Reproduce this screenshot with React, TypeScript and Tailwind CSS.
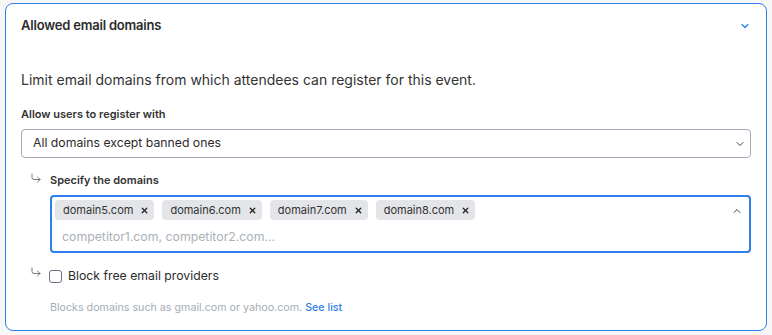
import { ChevronDown, ChevronUp, CornerDownRight, X } from 'lucide-react';

const domains = ['domain5.com', 'domain6.com', 'domain7.com', 'domain8.com'];

function Chip({ label }: { label: string }) {
  return (
    <span className="flex h-5 items-center gap-[7px] rounded bg-[#e3e5e8] pl-2 pr-[5px] text-[11px] text-[#333]">
      {label}
      <X className="h-[9px] w-[9px] text-[#222]" strokeWidth={3.5} />
    </span>
  );
}

export default function App() {
  return (
    <div className="min-h-screen bg-[#f7f7f8] px-[5px] pt-[3px] font-['Inter',sans-serif]">
      <div className="rounded-lg border border-[#2f80ed] bg-white px-[15px] pb-[15px]">
        {/* Header */}
        <div className="flex h-[43px] items-center justify-between">
          <h2 className="text-[13px] font-semibold tracking-[-0.2px] text-[#2b2b2b]">Allowed email domains</h2>
          <ChevronDown className="h-3 w-3 text-[#2f80ed]" strokeWidth={2.5} />
        </div>

        <p className="mt-[23px] text-sm leading-5 text-[#333]">
          Limit email domains from which attendees can register for this event.
        </p>

        <div className="mt-4 text-[11px] font-semibold leading-4 text-[#333]">
          Allow users to register with
        </div>
        <div className="mt-[7px] flex h-[29px] items-center justify-between rounded border border-[#a3acb6] pl-[11px] pr-[4px] text-[12.25px] text-[#2b2b2b]">
          <span>All domains except banned ones</span>
          <ChevronDown className="h-3 w-3 text-[#444]" strokeWidth={2} />
        </div>

        <div className="mt-[14px] flex items-center">
          <CornerDownRight className="ml-[9px] mr-[8px] h-3 w-3 -translate-y-[2px] text-[#555]" strokeWidth={1.6} />
          <span className="text-[11px] font-semibold leading-4 text-[#333]">Specify the domains</span>
        </div>

        <div className="ml-[29px] mt-[7px] flex items-start justify-between rounded border-2 border-[#2f80ed] pb-1 pl-[3px] pr-[6px] pt-[3px]">
          <div className="flex flex-col">
            <div className="flex gap-2">
              {domains.map((d) => (
                <Chip key={d} label={d} />
              ))}
            </div>
            <span className="mt-[7px] pl-[7px] text-[12.3px] leading-5 text-[#aab1b9]">
              competitor1.com, competitor2.com...
            </span>
          </div>
          <ChevronUp className="mt-[5px] h-3 w-3 text-[#444]" strokeWidth={2} />
        </div>

        <div className="mt-[13px] flex items-center">
          <CornerDownRight className="ml-[9px] mr-[7px] h-3 w-3 -translate-y-[4px] text-[#555]" strokeWidth={1.6} />
          <span className="h-[13px] w-[13px] rounded-[3px] border border-[#6b7280] bg-white" />
          <span className="ml-[6px] text-[12.25px] leading-5 text-[#2b2b2b]">Block free email providers</span>
        </div>

        <p className="ml-[29px] mt-[15px] text-[10.7px] leading-[14px] text-[#a5adb5]">
          Blocks domains such as gmail.com or yahoo.com.{' '}
          <span className="font-medium text-[#2f80ed]">See list</span>
        </p>
      </div>
    </div>
  );
}
